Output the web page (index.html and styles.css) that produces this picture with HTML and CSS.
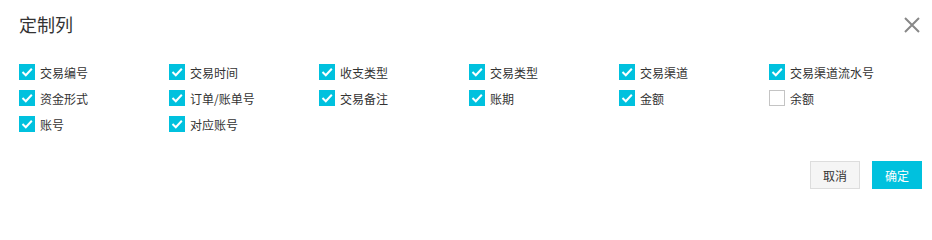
FILE: index.html
```html
<!DOCTYPE html>
<html lang="zh-CN">
<head>
<meta charset="utf-8">
<title>定制列</title>
<link rel="stylesheet" href="styles.css">
</head>
<body>
<div class="dialog">
  <div class="header">
    <h1 class="title">定制列</h1>
    <button class="close" aria-label="关闭">
      <svg width="16" height="16" viewBox="0 0 16 16"><path d="M1 1 L15 15 M15 1 L1 15" stroke="#888" stroke-width="2" fill="none"/></svg>
    </button>
  </div>
  <div class="grid">
    <label class="item"><span class="box on"><svg viewBox="0 0 16 16"><path d="M3.5 8 L6.8 11.2 L12.8 4.8" stroke="#fff" stroke-width="2" fill="none"/></svg></span>交易编号</label>
    <label class="item"><span class="box on"><svg viewBox="0 0 16 16"><path d="M3.5 8 L6.8 11.2 L12.8 4.8" stroke="#fff" stroke-width="2" fill="none"/></svg></span>交易时间</label>
    <label class="item"><span class="box on"><svg viewBox="0 0 16 16"><path d="M3.5 8 L6.8 11.2 L12.8 4.8" stroke="#fff" stroke-width="2" fill="none"/></svg></span>收支类型</label>
    <label class="item"><span class="box on"><svg viewBox="0 0 16 16"><path d="M3.5 8 L6.8 11.2 L12.8 4.8" stroke="#fff" stroke-width="2" fill="none"/></svg></span>交易类型</label>
    <label class="item"><span class="box on"><svg viewBox="0 0 16 16"><path d="M3.5 8 L6.8 11.2 L12.8 4.8" stroke="#fff" stroke-width="2" fill="none"/></svg></span>交易渠道</label>
    <label class="item"><span class="box on"><svg viewBox="0 0 16 16"><path d="M3.5 8 L6.8 11.2 L12.8 4.8" stroke="#fff" stroke-width="2" fill="none"/></svg></span>交易渠道流水号</label>
    <label class="item"><span class="box on"><svg viewBox="0 0 16 16"><path d="M3.5 8 L6.8 11.2 L12.8 4.8" stroke="#fff" stroke-width="2" fill="none"/></svg></span>资金形式</label>
    <label class="item"><span class="box on"><svg viewBox="0 0 16 16"><path d="M3.5 8 L6.8 11.2 L12.8 4.8" stroke="#fff" stroke-width="2" fill="none"/></svg></span>订单/账单号</label>
    <label class="item"><span class="box on"><svg viewBox="0 0 16 16"><path d="M3.5 8 L6.8 11.2 L12.8 4.8" stroke="#fff" stroke-width="2" fill="none"/></svg></span>交易备注</label>
    <label class="item"><span class="box on"><svg viewBox="0 0 16 16"><path d="M3.5 8 L6.8 11.2 L12.8 4.8" stroke="#fff" stroke-width="2" fill="none"/></svg></span>账期</label>
    <label class="item"><span class="box on"><svg viewBox="0 0 16 16"><path d="M3.5 8 L6.8 11.2 L12.8 4.8" stroke="#fff" stroke-width="2" fill="none"/></svg></span>金额</label>
    <label class="item"><span class="box off"></span>余额</label>
    <label class="item"><span class="box on"><svg viewBox="0 0 16 16"><path d="M3.5 8 L6.8 11.2 L12.8 4.8" stroke="#fff" stroke-width="2" fill="none"/></svg></span>账号</label>
    <label class="item"><span class="box on"><svg viewBox="0 0 16 16"><path d="M3.5 8 L6.8 11.2 L12.8 4.8" stroke="#fff" stroke-width="2" fill="none"/></svg></span>对应账号</label>
  </div>
  <div class="footer">
    <button class="btn cancel">取消</button>
    <button class="btn ok">确定</button>
  </div>
</div>
</body>
</html>
```
FILE: styles.css
```css
html, body {
  margin: 0;
  padding: 0;
  background: #fff;
}
body {
  font-family: "Noto Sans CJK SC", "Noto Sans", sans-serif;
  color: #333;
}
.dialog {
  width: 932px;
  height: 204px;
  box-sizing: border-box;
  padding: 0 10px 0 19px;
}
.header {
  height: 48px;
  display: flex;
  align-items: center;
  justify-content: space-between;
}
.title {
  margin: 0;
  font-size: 18px;
  font-weight: normal;
  line-height: 24px;
  color: #333;
}
.close {
  border: 0;
  background: none;
  padding: 0;
  margin-right: 2px;
  margin-top: 1px;
  width: 16px;
  height: 16px;
  display: flex;
}
.grid {
  margin-top: 11px;
  display: grid;
  grid-template-columns: repeat(6, 150px);
  grid-auto-rows: 26px;
}
.item {
  display: flex;
  align-items: center;
  font-size: 12px;
  color: #333;
  white-space: nowrap;
}
.box {
  width: 16px;
  height: 16px;
  box-sizing: border-box;
  margin-right: 5px;
  flex: none;
  display: flex;
}
.box svg {
  width: 16px;
  height: 16px;
}
.box.on {
  background: #00c1de;
}
.box.off {
  border: 1px solid #c4c4c4;
  background: #fff;
}
.footer {
  margin-top: 24px;
  display: flex;
  justify-content: flex-end;
  gap: 12px;
}
.btn {
  width: 50px;
  height: 28px;
  font-family: inherit;
  font-size: 12px;
  padding: 0;
  box-sizing: border-box;
}
.cancel {
  background: #f5f5f5;
  border: 1px solid #ddd;
  color: #333;
}
.ok {
  background: #00c1de;
  border: 1px solid #00c1de;
  color: #fff;
}
```
